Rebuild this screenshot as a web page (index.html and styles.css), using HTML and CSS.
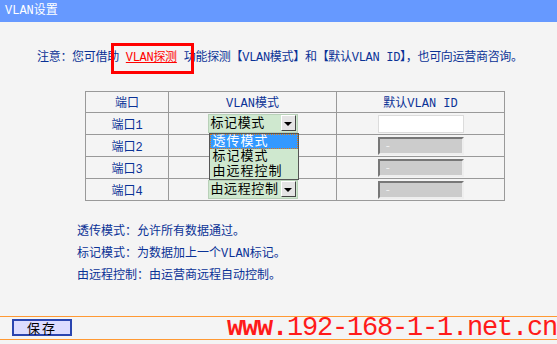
FILE: index.html
```html
<!DOCTYPE html>
<html lang="zh-CN">
<head>
    <meta charset="UTF-8">
    <title>VLAN设置</title>
    <link rel="stylesheet" href="styles.css">
</head>
<body>
    <!-- title bar -->
    <div class="title">VLAN设置</div>

    <div class="main">
        <p class="note">注意：您可借助 <span class="mark"><a href="#">VLAN探测</a></span> 功能探测【VLAN模式】和【默认VLAN ID】，也可向运营商咨询。</p>

        <table class="grid">
            <tr>
                <th class="c-port">端口</th>
                <th class="c-mode">VLAN模式</th>
                <th class="c-id">默认VLAN ID</th>
            </tr>
            <tr>
                <td>端口1</td>
                <td>
                    <div class="pick">
                        <span class="val">标记模式</span><span class="arrow"></span>
                        <!-- open dropdown -->
                        <ul class="menu">
                            <li class="on">透传模式</li>
                            <li>标记模式</li>
                            <li>由远程控制</li>
                        </ul>
                    </div>
                </td>
                <td><input class="vid" type="text" value=""></td>
            </tr>
            <tr>
                <td>端口2</td>
                <td><div class="pick under"><span class="val">透传模式</span><span class="arrow"></span></div></td>
                <td><input class="vid" type="text" value="-" disabled></td>
            </tr>
            <tr>
                <td>端口3</td>
                <td><div class="pick under"><span class="val">透传模式</span><span class="arrow"></span></div></td>
                <td><input class="vid" type="text" value="-" disabled></td>
            </tr>
            <tr>
                <td>端口4</td>
                <td><div class="pick"><span class="val">由远程控制</span><span class="arrow"></span></div></td>
                <td><input class="vid" type="text" value="-" disabled></td>
            </tr>
        </table>

        <ul class="legend">
            <li>透传模式：允许所有数据通过。</li>
            <li>标记模式：为数据加上一个VLAN标记。</li>
            <li>由远程控制：由运营商远程自动控制。</li>
        </ul>
    </div>

    <div class="footer">
        <button type="button">保存</button>
    </div>

    <div class="watermark"><b>www.</b>192-168-1-1.net.cn</div>
</body>
</html>
```

FILE: styles.css
```css
body {
    margin: 0;
    width: 557px;
    height: 344px;
    background-color: #f4f4f4;
    font-family: "Liberation Mono", "Noto Sans CJK SC", monospace;
    font-size: 12px;
    color: #0a3296;
    display: flex;
    flex-direction: column;
    position: relative;
    overflow: hidden;
}
.title {
    height: 22px;
    line-height: 22px;
    padding-left: 5px;
    background-color: #6699ff;
    color: #fff;
}
.note {
    margin: 29px 0 0 37px;
    line-height: 14px;
    white-space: nowrap;
    letter-spacing: -0.3px;
}
.mark {
    position: relative;
}
.mark a {
    color: #f00;
}
/* red highlight box drawn over the link */
.mark::after {
    content: "";
    position: absolute;
    left: -15px;
    right: -17px;
    top: -8px;
    bottom: -9px;
    border: 3px solid #f00;
}
.grid {
    margin: 26px 0 0 85px;
    border-collapse: collapse;
    width: 420px;
}
.grid th,
.grid td {
    border: 1px solid #999;
    padding: 0;
    text-align: center;
    font-weight: normal;
}
.grid th {
    height: 20px;
}
.grid td {
    height: 21px;
}
.c-port {
    width: 82px;
}
.c-mode {
    width: 167px;
}
.pick {
    position: relative;
    display: flex;
    width: 88px;
    height: 17px;
    margin: 0 auto;
    border: 1px solid #b8d0b8;
    background-color: #cfe8cf;
    color: #000;
    text-align: left;
    font-size: 13px;
    line-height: 17px;
}
.pick.under {
    visibility: hidden;
}
.val {
    flex: 1;
    padding-left: 2px;
    letter-spacing: 0.6px;
    white-space: nowrap;
    overflow: hidden;
}
.arrow {
    flex: none;
    width: 13px;
    margin: 0 1px 1px 0;
    background-color: #e4e4e4;
    border: 1px solid;
    border-color: #fff #444 #444 #fff;
    position: relative;
}
.arrow::after {
    content: "";
    position: absolute;
    left: 2px;
    top: 6px;
    border-left: 4px solid transparent;
    border-right: 4px solid transparent;
    border-top: 4px solid #000;
}
.menu {
    position: absolute;
    left: 0;
    top: 18px;
    width: 88px;
    margin: 0;
    padding: 0;
    list-style: none;
    background-color: #cfe8cf;
    border: 1px solid #555;
    z-index: 2;
    visibility: visible;
}
.menu li {
    height: 13px;
    line-height: 13px;
    padding-left: 2px;
    letter-spacing: 1px;
    border: 1px solid transparent;
}
.menu li.on {
    background-color: #3399ff;
    color: #fff;
    border: 1px dotted #e07a10;
}
.vid {
    display: block;
    box-sizing: border-box;
    width: 86px;
    height: 18px;
    margin: 0 auto;
    padding: 0 0 0 5px;
    border: 1px solid #dcdcdc;
    background-color: #fff;
    font-family: inherit;
    font-size: 11px;
}
.vid:disabled {
    border: 2px solid;
    border-color: #777 #eee #eee #777;
    background-color: #ccc;
    color: #f2f2f2;
}
.legend {
    margin: 20px 0 0 77px;
    padding: 0;
    list-style: none;
    font-size: 12px;
    line-height: 22px;
}
.footer {
    margin-top: auto;
    margin-bottom: 4px;
    border-top: 1px solid #ff9933;
    border-bottom: 1px solid #ff9933;
    padding: 2px 0 0 12px;
    box-sizing: border-box;
    height: 24px;
}
.footer button {
    display: block;
    width: 60px;
    height: 17px;
    padding: 0;
    background-color: #dcdcff;
    border: 2px solid #2a45b0;
    color: #000;
    font-family: "Noto Sans CJK SC", sans-serif;
    font-size: 13px;
    line-height: 13px;
    letter-spacing: 2px;
}
.watermark {
    position: absolute;
    right: 0;
    bottom: 2px;
    color: #ff1a1a;
    font-family: "Liberation Mono", monospace;
    font-size: 27px;
    letter-spacing: -1.2px;
    line-height: 28px;
}
```
